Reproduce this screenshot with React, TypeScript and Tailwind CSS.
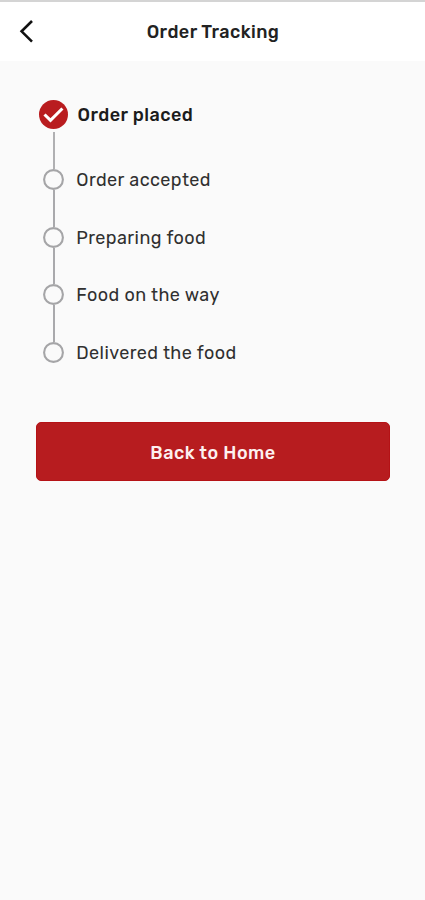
import React from "react";

const steps = [
  { label: "Order placed", done: true },
  { label: "Order accepted", done: false },
  { label: "Preparing food", done: false },
  { label: "Food on the way", done: false },
  { label: "Delivered the food", done: false },
];

const CheckMarker = () => (
  <svg className="block size-[29px]" viewBox="0 0 29 29" fill="none">
    <circle cx="14.5" cy="14.5" r="14.5" fill="#b91c1f" />
    <path d="M5.5 14.5L11.5 20.3L23.4 8.5" stroke="white" strokeWidth="3.1" />
  </svg>
);

const EmptyMarker = () => (
  <svg className="block size-[21px]" viewBox="0 0 21 21" fill="none">
    <circle cx="10.5" cy="10.5" r="9.4" stroke="#a5a5a7" strokeWidth="2.1" />
  </svg>
);

const Header = () => (
  <header className="flex h-[61px] items-center border-t-2 border-[#d4d4d4] bg-white">
    <button aria-label="Back" className="ml-[19px] w-[15px]">
      <svg className="block h-[24px] w-[15px]" viewBox="0 0 15 24" fill="none">
        <path d="M13 1L2.6 11.3L13 21.6" stroke="#111111" strokeWidth="2.6" />
      </svg>
    </button>
    <h1 className="flex-1 pr-[33px] text-center text-[18px] font-medium leading-6 tracking-[0.43px] text-[#222222]">
      Order Tracking
    </h1>
  </header>
);

const App = () => {
  return (
    <div className="min-h-screen bg-[#fafafa] font-['Rubik','Roboto',sans-serif]">
      <Header />

      <main className="pl-9 pr-[35px] pt-[39px]">
        <ol className="pl-[3px]">
          {steps.map((step, index) => (
            <li key={step.label} className="flex">
              <div className="flex w-[29px] flex-col items-center">
                {step.done ? <CheckMarker /> : <EmptyMarker />}
                {index < steps.length - 1 && (
                  <div
                    className={
                      step.done
                        ? "mt-[3px] h-[36.7px] w-[2px] bg-[#b0b0b2]"
                        : "h-[36.85px] w-[2px] bg-[#a9a9ac]"
                    }
                  />
                )}
              </div>
              <span
                className={
                  step.done
                    ? "ml-[9.5px] pt-px text-[18px] font-medium leading-[29px] tracking-[0.45px] text-[#1c1c1c]"
                    : "ml-[8.3px] pt-px text-[18px] leading-[21px] tracking-[0.42px] text-[#303030]"
                }
              >
                {step.label}
              </span>
            </li>
          ))}
        </ol>

        <button className="mt-[58px] h-[59px] w-full rounded-[5px] border border-[#b51216] bg-[#b71c1f] pt-[3px] text-[18px] font-medium tracking-[0.5px] text-[#fdf0f0]">
          Back to Home
        </button>
      </main>
    </div>
  );
};

export default App;
